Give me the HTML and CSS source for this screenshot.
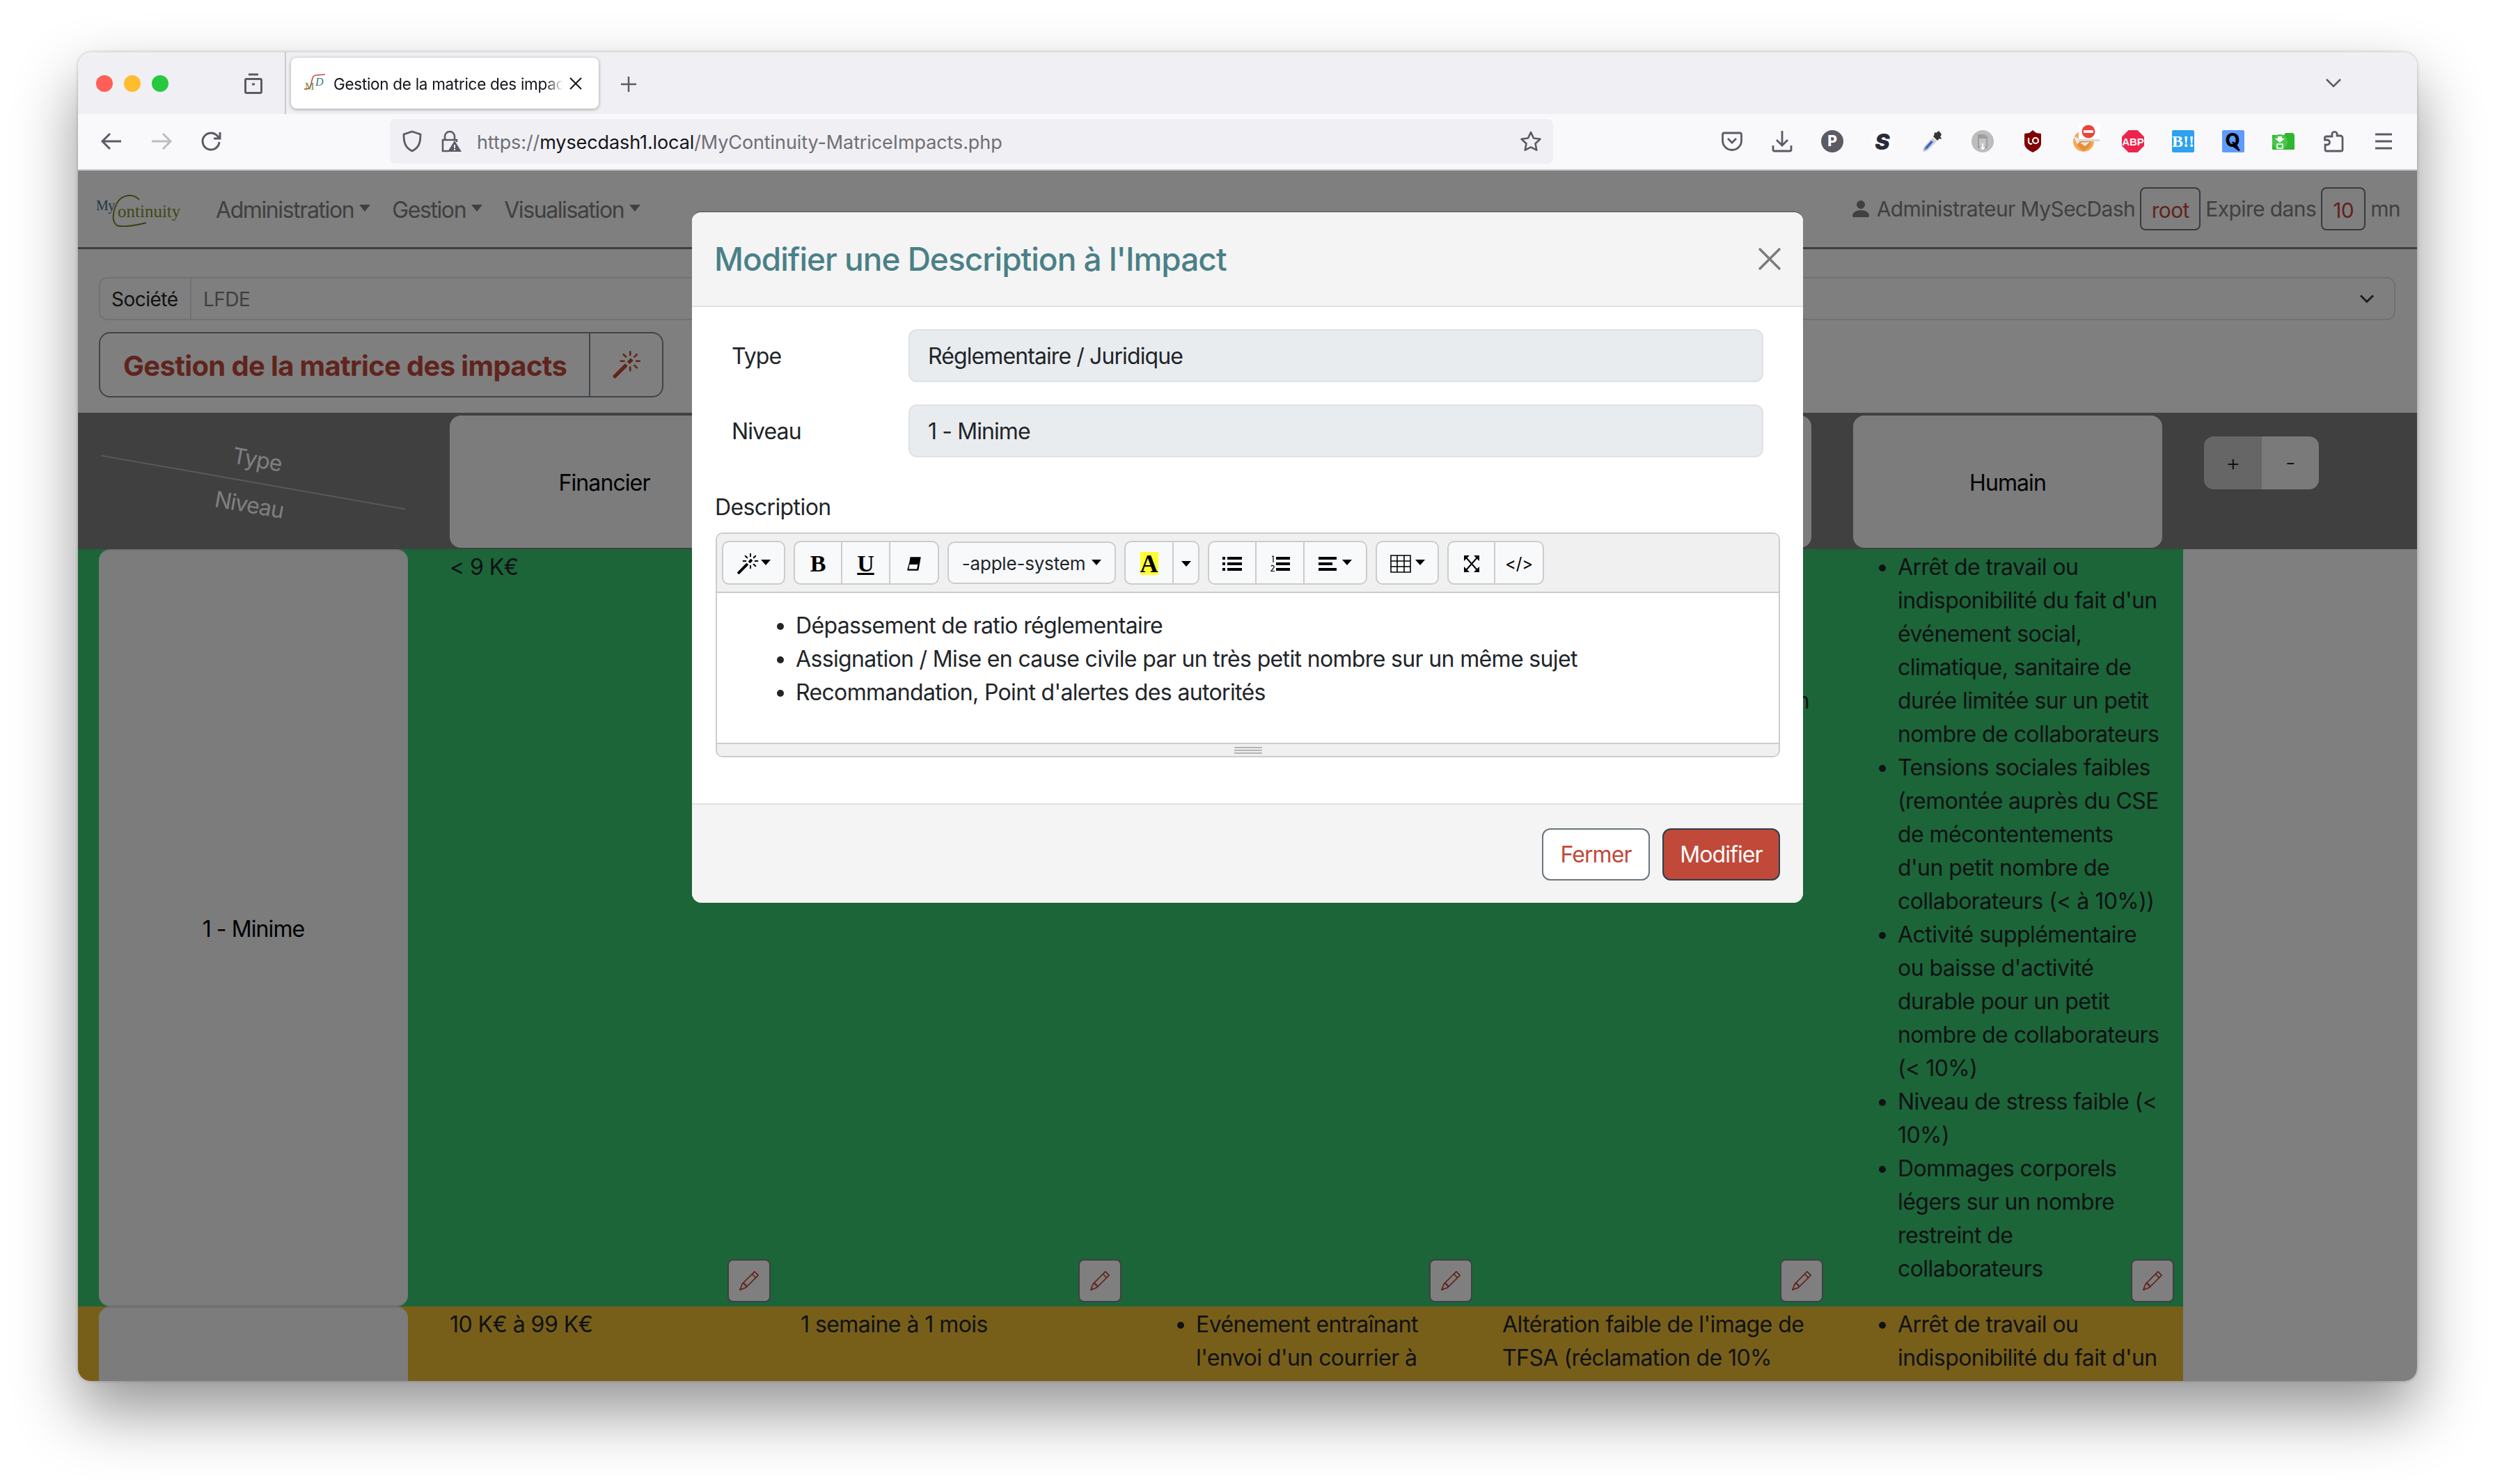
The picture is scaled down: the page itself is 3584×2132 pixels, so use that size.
FILE: index.html
```html
<!DOCTYPE html>
<html lang="fr">
<head>
<meta charset="utf-8">
<title>Gestion de la matrice des impacts</title>
<link rel="stylesheet" href="styles.css">
</head>
<body>
<div class="window">
  <header class="titlebar">
    <div class="lights"><span class="light red"></span><span class="light amber"></span><span class="light green"></span></div>
    <svg class="fxview" viewBox="0 0 32 32" width="32" height="32"><path d="M9 3h14M6 9.500h20a1.500 1.500 0 0 1 1.500 1.500v17a1.500 1.500 0 0 1-1.500 1.500H6A1.500 1.500 0 0 1 4.500 28V11A1.500 1.500 0 0 1 6 9.500zM14 17h4" fill="none" stroke="#5b5b66" stroke-width="3"/></svg>
    <div class="tab-sep"></div>
    <div class="tab">
      <svg class="favicon" viewBox="0 0 32 32" width="32" height="32"><path d="M1 23l8-1 4-15c1-3 3-4 6-4l12-1" fill="none" stroke="#c0493a" stroke-width="1.500"/><text x="2" y="24" class="fav-m">M</text><text x="17" y="18" class="fav-d">D</text></svg>
      <span class="tab-title">Gestion de la matrice des impacts</span>
      <svg class="tab-close" viewBox="0 0 20 20" width="20" height="20"><path d="M2 2l16 16M18 2L2 18" stroke="#15141a" stroke-width="2"/></svg>
    </div>
    <svg class="newtab" viewBox="0 0 24 24" width="24" height="24"><path d="M12 1v22M1 12h22" stroke="#5b5b66" stroke-width="2.500"/></svg>
    <svg class="tablist" viewBox="0 0 24 24" width="24" height="24"><path d="M2 7l10 10L22 7" fill="none" stroke="#5b5b66" stroke-width="2.500"/></svg>
  </header>

  <nav class="toolbar">
    <svg class="tb-back" viewBox="0 0 32 32" width="32" height="32"><path d="M30 16H4M14 5L3 16l11 11" fill="none" stroke="#5b5b66" stroke-width="3"/></svg>
    <svg class="tb-fwd" viewBox="0 0 32 32" width="32" height="32"><path d="M2 16h26M18 5l11 11-11 11" fill="none" stroke="#bdbdc2" stroke-width="3"/></svg>
    <svg class="tb-reload" viewBox="0 0 32 32" width="32" height="32"><path d="M27 17a12 12 0 1 1-4-10l5 5M28 3v9h-9" fill="none" stroke="#5b5b66" stroke-width="3"/></svg>
    <div class="urlbar">
      <svg class="shield" viewBox="0 0 32 32" width="32" height="32"><path d="M16 2l12 4c0 12-2 19-12 24C6 25 4 18 4 6z" fill="none" stroke="#5b5b66" stroke-width="2.800"/></svg>
      <svg class="lock" viewBox="0 0 32 32" width="32" height="32"><path d="M8 14V9a7 7 0 0 1 14 0v5M14 30H5V14h20v3" fill="none" stroke="#5b5b66" stroke-width="2.600"/><path d="M22 15l10 16H12z" fill="#5b5b66"/><path d="M22 21v5M22 27v2" stroke="#f0f0f4" stroke-width="2"/></svg>
      <span class="url"><span class="url-dim">https://</span>mysecdash1.local<span class="url-dim">/MyContinuity-MatriceImpacts.php</span></span>
      <svg class="star" viewBox="0 0 32 32" width="32" height="32"><path d="M16 3l4 8.500 9.500 1.300-7 6.500 1.800 9.400L16 24.300l-8.300 4.400 1.800-9.400-7-6.500L12 11.500z" fill="none" stroke="#5b5b66" stroke-width="2.600" stroke-linejoin="round"/></svg>
    </div>
    <div class="addons">
      <svg class="addon" viewBox="0 0 32 32"><path d="M5 4h22a2.500 2.500 0 0 1 2.500 2.500V15a13.500 13.500 0 0 1-27 0V6.500A2.500 2.500 0 0 1 5 4zM10 12l6 6 6-6" fill="none" stroke="#5b5b66" stroke-width="2.800"/></svg>
      <svg class="addon" viewBox="0 0 32 32"><path d="M16 1v21M8 14l8 8 8-8M3 22v6a2 2 0 0 0 2 2h22a2 2 0 0 0 2-2v-6" fill="none" stroke="#5b5b66" stroke-width="2.800"/></svg>
      <svg class="addon" viewBox="0 0 32 32"><circle cx="16" cy="16" r="16" fill="#5b5b66"/><text x="16" y="23" class="ao-p">P</text></svg>
      <svg class="addon" viewBox="0 0 32 32"><circle cx="16" cy="16" r="16" fill="#fff"/><text x="16" y="28" class="ao-s">S</text></svg>
      <svg class="addon" viewBox="0 0 32 32"><path d="M2 31l1-6L16 11l6 5L8 30z" fill="#c8ccd4"/><path d="M4 29l2-5 8-9 3 2-8 9z" fill="#3a66c8"/><path d="M17 9l6 6 3-3 2 1 1-2-2-1 2-4-4-5-4 3-1-1-2 2 1 1z" fill="#33343c"/></svg>
      <svg class="addon" viewBox="0 0 32 32"><circle cx="16" cy="16" r="16" fill="#bdbdbd"/><path d="M9 6h10l4 4v16H9z" fill="#9d9d9d"/><path d="M11 12h10v11H11z" fill="#c4c4c4"/><path d="M16 19v7M13 24l3 3 3-3" stroke="#fff" stroke-width="2" fill="none"/></svg>
      <svg class="addon" viewBox="0 0 32 32"><path d="M16 0l5 4 7 1v14c0 6-6 10-12 13C10 29 4 25 4 19V5l7-1z" fill="#800000"/><path d="M10 11v6a3 3 0 0 0 5 2M16 15a4 4 0 1 0 8 0 4 4 0 1 0-8 0" fill="none" stroke="#fff" stroke-width="2.200"/></svg>
      <svg class="addon" viewBox="0 0 32 32" overflow="visible"><circle cx="17" cy="16" r="15" fill="#f4a95c"/><path d="M6 12l24-1-4 13-9 6-8-6z" fill="#e88f35"/><path d="M2 8l12 6-6 6zM12 18l14-1-7 6z" fill="#e9e9e9"/><rect x="10" y="-10" width="30" height="25" rx="2" fill="#fff"/><rect x="10" y="13" width="30" height="3" fill="#d8d8d8"/><circle cx="24" cy="2" r="9.500" fill="#e8463c"/><rect x="17" y="0" width="14" height="4" fill="#f0f0f0"/></svg>
      <svg class="addon" viewBox="0 0 32 32"><path d="M9.500 0h13L32 9.500v13L22.500 32h-13L0 22.500v-13z" fill="#ed254e"/><text x="16" y="22" class="ao-abp">ABP</text></svg>
      <svg class="addon" viewBox="0 0 32 32"><rect width="32" height="32" rx="2" fill="#2ea1ef"/><text x="16" y="24" class="ao-b">B!!</text></svg>
      <svg class="addon" viewBox="0 0 32 32"><rect width="32" height="32" rx="2" fill="#5e9bff"/><text x="15" y="24" class="ao-q">Q</text><path d="M17 23l8 6" stroke="#000" stroke-width="3"/></svg>
      <svg class="addon" viewBox="0 0 32 32"><path d="M0 7h17l2-3h11l2 3v20a1 1 0 0 1-1 1H1a1 1 0 0 1-1-1z" fill="#2fb52f"/><circle cx="11" cy="17" r="11" fill="#49c649"/><path d="M8 9h6v3h4l-7 6-7-6h4z" fill="#fff"/><rect x="7" y="20" width="8" height="6" fill="none" stroke="#fff" stroke-width="1.600"/></svg>
      <svg class="addon" viewBox="0 0 32 32"><path d="M14 4.500a4 4 0 0 1 7 0c.5 1 0 2 0 3.500h5a3 3 0 0 1 3 3v17a2 2 0 0 1-2 2H6a2 2 0 0 1-2-2v-7h3a3.500 3.500 0 0 0 0-7H3.500v-3a2 2 0 0 1 2-2H14c.3-1.500-.5-2.500 0-3.500z" fill="none" stroke="#5b5b66" stroke-width="2.800"/></svg>
      <svg class="addon" viewBox="0 0 32 32"><path d="M4 6h24M4 16h24M4 26h24" stroke="#5b5b66" stroke-width="3"/></svg>
    </div>
  </nav>

  <main class="page">
    <div class="navbar">
      <div class="nav-left">
        <svg class="logo" viewBox="0 0 121 48" width="121" height="48"><path d="M62 9C52-2 34 2 28 18c-4 11-6 22 2 28 10 3 26 0 42-4" fill="none" stroke="#76851f" stroke-width="2"/><text x="0" y="24" class="logo-my">My</text><text x="31" y="34" class="logo-cont">ontinuity</text></svg>
        <a class="nav-link nav-admin">Administration<span class="caret"></span></a>
        <a class="nav-link nav-gestion">Gestion<span class="caret"></span></a>
        <a class="nav-link">Visualisation<span class="caret"></span></a>
      </div>
      <div class="nav-right">
        <svg class="person" viewBox="0 0 16 16" width="32" height="32"><path d="M3 14s-1 0-1-1 1-4 6-4 6 3 6 4-1 1-1 1H3Zm5-6a3 3 0 1 0 0-6 3 3 0 0 0 0 6Z"/></svg>
        <span>Administrateur MySecDash</span>
        <span class="tag tag-root">root</span>
        <span>Expire dans</span>
        <span class="tag tag-time">10</span>
        <span>mn</span>
      </div>
    </div>

    <div class="company">
      <span class="company-label">Société</span>
      <span class="company-value">LFDE</span>
      <svg class="company-chev" viewBox="0 0 16 16" width="24" height="24"><path d="M2 5l6 6 6-6" fill="none" stroke="#343a40" stroke-width="2"/></svg>
    </div>

    <div class="page-title">
      <h1 class="page-title-text">Gestion de la matrice des impacts</h1>
      <span class="page-title-btn">
        <svg viewBox="0 0 16 16" width="42" height="42" class="wand-red"><path d="M9.500 2.672a.5.5 0 1 0 1 0V.843a.5.5 0 0 0-1 0v1.829Zm4.500.035A.5.5 0 0 0 13.293 2L12 3.293a.5.5 0 1 0 .707.707L14 2.707ZM7.293 4A.5.5 0 1 0 8 3.293L6.707 2A.5.5 0 0 0 6 2.707L7.293 4Zm-.621 2.500a.5.5 0 1 0 0-1H4.843a.5.5 0 1 0 0 1h1.829Zm8.485 0a.5.5 0 1 0 0-1h-1.829a.5.5 0 0 0 0 1h1.829ZM13.293 10A.5.5 0 1 0 14 9.293L12.707 8a.5.5 0 1 0-.707.707L13.293 10ZM9.500 11.157a.5.5 0 0 0 1 0V9.328a.5.5 0 0 0-1 0v1.829Zm1.854-5.097a.5.5 0 0 0 0-.706l-.708-.708a.5.5 0 0 0-.707 0L8.646 5.940a.5.5 0 0 0 0 .707l.708.708a.5.5 0 0 0 .707 0l1.293-1.293Zm-3 3a.5.5 0 0 0 0-.706l-.708-.708a.5.5 0 0 0-.707 0L.646 13.940a.5.5 0 0 0 0 .707l.708.708a.5.5 0 0 0 .707 0L8.354 9.060Z"/></svg>
      </span>
    </div>

    <div class="matrix">
      <div class="head-corner">
        <div class="corner-inner">
          <span>Type</span>
          <span class="corner-line"></span>
          <span>Niveau</span>
        </div>
      </div>
      <div class="head-cell"><div class="head-box">Financier</div></div>
      <div class="head-cell"><div class="head-box">Opérationnel</div></div>
      <div class="head-cell"><div class="head-box">Réglementaire / Juridique</div></div>
      <div class="head-cell"><div class="head-box">Image</div></div>
      <div class="head-cell"><div class="head-box">Humain</div></div>
      <div class="head-tools"><div class="plusminus"><span class="pm pm-plus">+</span><span class="pm pm-minus">-</span></div></div>

      <div class="level green"><div class="level-box">1 - Minime</div></div>
      <div class="cell green">&lt; 9 K€<button class="edit"><svg viewBox="0 0 16 16" width="28" height="28"><path d="M12.146.146a.5.5 0 0 1 .708 0l3 3a.5.5 0 0 1 0 .708l-10 10a.5.5 0 0 1-.168.11l-5 2a.5.5 0 0 1-.65-.65l2-5a.5.5 0 0 1 .11-.168l10-10zM11.207 2.500 13.500 4.793 14.793 3.500 12.500 1.207 11.207 2.500zm1.586 3L10.500 3.207 4 9.707V10h.5a.5.5 0 0 1 .5.5v.5h.5a.5.5 0 0 1 .5.5v.5h.293l6.500-6.500zm-9.761 5.175-.106.106-1.528 3.821 3.821-1.528.106-.106A.5.5 0 0 1 5 12.500V12h-.5a.5.5 0 0 1-.5-.5V11h-.5a.5.5 0 0 1-.468-.325z"/></svg></button></div>
      <div class="cell green"><button class="edit"><svg viewBox="0 0 16 16" width="28" height="28"><path d="M12.146.146a.5.5 0 0 1 .708 0l3 3a.5.5 0 0 1 0 .708l-10 10a.5.5 0 0 1-.168.11l-5 2a.5.5 0 0 1-.65-.65l2-5a.5.5 0 0 1 .11-.168l10-10zM11.207 2.500 13.500 4.793 14.793 3.500 12.500 1.207 11.207 2.500zm1.586 3L10.500 3.207 4 9.707V10h.5a.5.5 0 0 1 .5.5v.5h.5a.5.5 0 0 1 .5.5v.5h.293l6.500-6.500zm-9.761 5.175-.106.106-1.528 3.821 3.821-1.528.106-.106A.5.5 0 0 1 5 12.500V12h-.5a.5.5 0 0 1-.5-.5V11h-.5a.5.5 0 0 1-.468-.325z"/></svg></button></div>
      <div class="cell green"><button class="edit"><svg viewBox="0 0 16 16" width="28" height="28"><path d="M12.146.146a.5.5 0 0 1 .708 0l3 3a.5.5 0 0 1 0 .708l-10 10a.5.5 0 0 1-.168.11l-5 2a.5.5 0 0 1-.65-.65l2-5a.5.5 0 0 1 .11-.168l10-10zM11.207 2.500 13.500 4.793 14.793 3.500 12.500 1.207 11.207 2.500zm1.586 3L10.500 3.207 4 9.707V10h.5a.5.5 0 0 1 .5.5v.5h.5a.5.5 0 0 1 .5.5v.5h.293l6.500-6.500zm-9.761 5.175-.106.106-1.528 3.821 3.821-1.528.106-.106A.5.5 0 0 1 5 12.500V12h-.5a.5.5 0 0 1-.5-.5V11h-.5a.5.5 0 0 1-.468-.325z"/></svg></button></div>
      <div class="cell green"><div class="stray"><br><br><br><br>n</div><button class="edit"><svg viewBox="0 0 16 16" width="28" height="28"><path d="M12.146.146a.5.5 0 0 1 .708 0l3 3a.5.5 0 0 1 0 .708l-10 10a.5.5 0 0 1-.168.11l-5 2a.5.5 0 0 1-.65-.65l2-5a.5.5 0 0 1 .11-.168l10-10zM11.207 2.500 13.500 4.793 14.793 3.500 12.500 1.207 11.207 2.500zm1.586 3L10.500 3.207 4 9.707V10h.5a.5.5 0 0 1 .5.5v.5h.5a.5.5 0 0 1 .5.5v.5h.293l6.500-6.500zm-9.761 5.175-.106.106-1.528 3.821 3.821-1.528.106-.106A.5.5 0 0 1 5 12.500V12h-.5a.5.5 0 0 1-.5-.5V11h-.5a.5.5 0 0 1-.468-.325z"/></svg></button></div>
      <div class="cell green">
        <ul class="cell-list">
          <li>Arrêt de travail ou<br>indisponibilité du fait d'un<br>événement social,<br>climatique, sanitaire de<br>durée limitée sur un petit<br>nombre de collaborateurs</li>
          <li>Tensions sociales faibles<br>(remontée auprès du CSE<br>de mécontentements<br>d'un petit nombre de<br>collaborateurs (&lt; à 10%))</li>
          <li>Activité supplémentaire<br>ou baisse d'activité<br>durable pour un petit<br>nombre de collaborateurs<br>(&lt; 10%)</li>
          <li>Niveau de stress faible (&lt;<br>10%)</li>
          <li>Dommages corporels<br>légers sur un nombre<br>restreint de<br>collaborateurs</li>
        </ul>
        <button class="edit"><svg viewBox="0 0 16 16" width="28" height="28"><path d="M12.146.146a.5.5 0 0 1 .708 0l3 3a.5.5 0 0 1 0 .708l-10 10a.5.5 0 0 1-.168.11l-5 2a.5.5 0 0 1-.65-.65l2-5a.5.5 0 0 1 .11-.168l10-10zM11.207 2.500 13.500 4.793 14.793 3.500 12.500 1.207 11.207 2.500zm1.586 3L10.500 3.207 4 9.707V10h.5a.5.5 0 0 1 .5.5v.5h.5a.5.5 0 0 1 .5.5v.5h.293l6.500-6.500zm-9.761 5.175-.106.106-1.528 3.821 3.821-1.528.106-.106A.5.5 0 0 1 5 12.500V12h-.5a.5.5 0 0 1-.5-.5V11h-.5a.5.5 0 0 1-.468-.325z"/></svg></button>
      </div>
      <div class="filler"></div>

      <div class="level gold"><div class="level-box"></div></div>
      <div class="cell gold">10 K€ à 99 K€</div>
      <div class="cell gold">1 semaine à 1 mois</div>
      <div class="cell gold"><ul class="cell-list"><li>Evénement entraînant<br>l'envoi d'un courrier à</li></ul></div>
      <div class="cell gold">Altération faible de l'image de<br>TFSA (réclamation de 10%</div>
      <div class="cell gold"><ul class="cell-list"><li>Arrêt de travail ou<br>indisponibilité du fait d'un</li></ul></div>
      <div class="filler"></div>
    </div>

    <div class="backdrop">
      <section class="modal">
        <header class="modal-head">
          <h2 class="modal-title">Modifier une Description à l'Impact</h2>
          <svg class="modal-close" viewBox="0 0 32 32" width="32" height="32"><path d="M1 1l30 30M31 1L1 31" stroke="#7b7b7b" stroke-width="3.500"/></svg>
        </header>
        <div class="modal-body">
          <div class="field field-first"><label class="field-label">Type</label><div class="field-input">Réglementaire / Juridique</div></div>
          <div class="field"><label class="field-label">Niveau</label><div class="field-input">1 - Minime</div></div>
          <div class="desc-label">Description</div>
          <div class="editor">
            <div class="ed-toolbar">
              <button class="ed-btn solo w-magic"><svg viewBox="0 0 16 16" width="32" height="32"><path d="M9.500 2.672a.5.5 0 1 0 1 0V.843a.5.5 0 0 0-1 0v1.829Zm4.500.035A.5.5 0 0 0 13.293 2L12 3.293a.5.5 0 1 0 .707.707L14 2.707ZM7.293 4A.5.5 0 1 0 8 3.293L6.707 2A.5.5 0 0 0 6 2.707L7.293 4Zm-.621 2.500a.5.5 0 1 0 0-1H4.843a.5.5 0 1 0 0 1h1.829Zm8.485 0a.5.5 0 1 0 0-1h-1.829a.5.5 0 0 0 0 1h1.829ZM13.293 10A.5.5 0 1 0 14 9.293L12.707 8a.5.5 0 1 0-.707.707L13.293 10ZM9.500 11.157a.5.5 0 0 0 1 0V9.328a.5.5 0 0 0-1 0v1.829Zm1.854-5.097a.5.5 0 0 0 0-.706l-.708-.708a.5.5 0 0 0-.707 0L8.646 5.940a.5.5 0 0 0 0 .707l.708.708a.5.5 0 0 0 .707 0l1.293-1.293Zm-3 3a.5.5 0 0 0 0-.706l-.708-.708a.5.5 0 0 0-.707 0L.646 13.940a.5.5 0 0 0 0 .707l.708.708a.5.5 0 0 0 .707 0L8.354 9.060Z"/></svg><span class="caret-sm"></span></button>
              <div class="ed-group">
                <button class="ed-btn w-70 serif-b">B</button>
                <button class="ed-btn w-69 serif-b underline">U</button>
                <button class="ed-btn w-70"><svg viewBox="0 0 24 24" width="26" height="26"><path d="M7 3h14l-1 6H6zM6 9h14l-2 11a1 1 0 0 1-1 1H4a1 1 0 0 1-1-1z" fill="#000"/><path d="M6 13h11l-1.300 6H5z" fill="#f8f9fa"/></svg></button>
              </div>
              <button class="ed-btn solo w-font">-apple-system<span class="caret-sm"></span></button>
              <div class="ed-group">
                <button class="ed-btn w-71"><span class="color-a">A</span></button>
                <button class="ed-btn w-37"><span class="caret-sm flush"></span></button>
              </div>
              <div class="ed-group">
                <button class="ed-btn w-70"><svg viewBox="0 0 28 24" width="28" height="24"><path d="M0 2h4v4H0zM7 2h21v4H7zM0 10h4v4H0zM7 10h21v4H7zM0 18h4v4H0zM7 18h21v4H7z"/></svg></button>
                <button class="ed-btn w-69"><svg viewBox="0 0 28 24" width="28" height="24"><path d="M8 2h20v4H8zM8 10h20v4H8zM8 18h20v4H8z"/><path d="M2 1.500L4 1v9" stroke="#000" stroke-width="1.200" fill="none"/><path d="M1 15.500c1-2 5-1 4 1.500L1 22.500h5" stroke="#000" stroke-width="1.200" fill="none"/></svg></button>
                <button class="ed-btn w-90"><svg viewBox="0 0 28 24" width="28" height="24"><path d="M0 2h26v4H0zM0 10h20v4H0zM0 18h26v4H0z"/></svg><span class="caret-sm"></span></button>
              </div>
              <button class="ed-btn solo w-table"><svg viewBox="0 0 30 26" width="30" height="26"><path d="M1 1h28v24H1zM1 9h28M1 17h28M10 1v24M20 1v24" fill="none" stroke="#000" stroke-width="1.600"/></svg><span class="caret-sm"></span></button>
              <div class="ed-group">
                <button class="ed-btn w-69"><svg viewBox="0 0 24 26" width="24" height="26"><path d="M1 1h8L1 9zM23 1h-8l8 8zM1 25h8l-8-8zM23 25h-8l8-8z"/><path d="M4 4l16 18M20 4L4 22" stroke="#000" stroke-width="2"/></svg></button>
                <button class="ed-btn w-70 code">&lt;/&gt;</button>
              </div>
            </div>
            <div class="ed-content">
              <ul class="ed-list">
                <li>Dépassement de ratio réglementaire</li>
                <li>Assignation / Mise en cause civile par un très petit nombre sur un même sujet</li>
                <li>Recommandation, Point d'alertes des autorités</li>
              </ul>
            </div>
            <div class="ed-status"><span class="grip"></span></div>
          </div>
        </div>
        <footer class="modal-foot">
          <button class="btn btn-close">Fermer</button>
          <button class="btn btn-save">Modifier</button>
        </footer>
      </section>
    </div>
  </main>
</div>
</body>
</html>
```

FILE: styles.css
```css
* { box-sizing: border-box; }
html, body { margin: 0; height: 2132px; overflow: hidden; background: #fff; }
body {
  padding: 75px 112px 0;
  font-family: Inter, "Liberation Sans", sans-serif;
  font-size: 32px;
  line-height: 48px;
  color: #212529;
  letter-spacing: -0.9px;
}
button { font: inherit; letter-spacing: inherit; color: inherit; }
svg { display: block; flex: none; }

.window {
  position: relative;
  width: 3360px;
  height: 1909px;
  overflow: hidden;
  border-radius: 20px 20px 18px 18px;
  box-shadow: 0 44px 90px rgba(0,0,0,.42), 0 0 4px rgba(0,0,0,.25);
  background: #fff;
}

/* Browser chrome */
.titlebar {
  height: 89px;
  display: flex;
  align-items: flex-start;
  background: #f0f0f4;
}
.lights { display: flex; gap: 16px; margin: 33px 0 0 26px; }
.light { width: 24px; height: 24px; border-radius: 50%; }
.red { background: #ff5f57; }
.amber { background: #febc2e; }
.lights .green { background: #28c840; }
.fxview { margin: 29px 0 0 106px; }
.tab-sep { width: 2px; height: 89px; margin-left: 29px; background: #c9c9ce; }
.tab {
  width: 442px;
  height: 73px;
  margin: 8px 0 0 7px;
  padding: 2px 23px 0 18px;
  display: flex;
  align-items: center;
  background: #fff;
  border-radius: 8px;
  box-shadow: 0 1px 5px rgba(0,0,0,.35);
  font-size: 22.500px;
  letter-spacing: -0.3px;
  color: #15141a;
}
.favicon { margin-right: 11px; }
.fav-m { font: 15px "Liberation Serif", serif; fill: #7a8a3a; letter-spacing: 0; }
.fav-d { font: italic 16px "Liberation Serif", serif; fill: #2c7a87; letter-spacing: 0; }
.tab-title {
  flex: 1;
  white-space: nowrap;
  overflow: hidden;
  -webkit-mask-image: linear-gradient(to right, #000 92%, transparent);
  mask-image: linear-gradient(to right, #000 92%, transparent);
}
.tab-close { margin-left: 8px; margin-top: -2px; }
.newtab { margin: 34px 0 0 31px; }
.tablist { margin: 32px 0 0 2425px; }

.toolbar {
  height: 81px;
  padding: 8px 0 9px 32px;
  display: flex;
  align-items: center;
  background: #f9f9fb;
  border-bottom: 2px solid #cfcfd3;
}
.tb-fwd { margin-left: 40px; }
.tb-reload { margin-left: 40px; }
.urlbar {
  width: 1671px;
  height: 64px;
  margin-left: 240px;
  padding: 0 16px;
  display: flex;
  align-items: center;
  background: #f0f0f4;
  border-radius: 8px;
}
.lock { margin-left: 23px; }
.url { margin-left: 22px; padding-top: 3px; flex: 1; font-size: 27px; letter-spacing: -0.1px; color: #15141a; }
.url-dim { color: #6f6f76; }
.addons { display: flex; gap: 40px; margin-left: 241px; }
.addon { width: 32px; height: 32px; }
.ao-p { font: 800 21px Inter, sans-serif; fill: #fff; text-anchor: middle; letter-spacing: 0; }
.ao-s { font: italic 900 32px Inter, sans-serif; fill: #2b2a3d; text-anchor: middle; letter-spacing: 0; }
.ao-abp { font: 800 15px "Liberation Sans", sans-serif; fill: #fff; text-anchor: middle; letter-spacing: 0; }
.ao-b { font: bold 24px "Liberation Serif", serif; fill: #fff; text-anchor: middle; letter-spacing: 0; }
.ao-q { font: 800 27px Inter, sans-serif; fill: #000; text-anchor: middle; letter-spacing: 0; }

/* Page under the dimmed backdrop */
.page { position: relative; height: 1739px; background: #fff; }
.navbar {
  height: 113px;
  padding: 0 24px 0 26px;
  display: flex;
  justify-content: space-between;
  align-items: center;
  border-bottom: 3px solid #7c7c7c;
  color: #808080;
}
.nav-left, .nav-right { display: flex; align-items: center; }
.logo { margin-right: 51px; }
.logo-my { font: 20px "Liberation Serif", serif; fill: #3d6f8a; letter-spacing: -0.5px; }
.logo-cont { font: 25px "Liberation Serif", serif; fill: #80902a; letter-spacing: 0; }
.nav-left { padding-top: 4px; letter-spacing: -1.4px; }
.nav-link { display: flex; align-items: center; margin-right: 31px; }
.caret {
  margin-left: 8px;
  margin-bottom: 6px;
  border-top: 10px solid currentColor;
  border-left: 8px solid transparent;
  border-right: 8px solid transparent;
}
.nav-right { gap: 7px; font-size: 30px; letter-spacing: -0.6px; }
.person { fill: #808080; margin: 0 0 0 -4px; }
.tag {
  height: 62px;
  display: flex;
  align-items: center;
  justify-content: center;
  padding-top: 3px;
  border: 2px solid #6f7780;
  border-radius: 8px;
  color: #c0493a;
}
.tag-root { width: 87px; }
.tag-time { width: 64px; }

.company {
  height: 62px;
  margin: 40px 31px 0 30px;
  display: flex;
  align-items: center;
  border: 2px solid #dee2e6;
  border-radius: 12px;
  font-size: 28px;
  letter-spacing: -0.5px;
}
.company-label {
  height: 100%;
  padding: 6px 16px 0 16px;
  width: 131px;
  color: #212529;
  border-right: 2px solid #dee2e6;
  white-space: nowrap;
}
.company-value { flex: 1; padding: 2px 0 0 17px; color: #808080; }
.company-chev { margin-right: 27px; }

.page-title {
  width: 811px;
  height: 94px;
  margin: 17px 0 0 30px;
  display: flex;
  border: 2px solid #7e8a94;
  border-radius: 16px;
  color: #c0493a;
}
.page-title-text {
  width: 702px;
  margin: 0;
  padding: 0 0 0 33px;
  font-size: 40px;
  font-weight: 700;
  line-height: 93px;
  letter-spacing: -0.65px;
  white-space: nowrap;
}
.page-title-btn {
  flex: 1;
  display: flex;
  align-items: center;
  justify-content: center;
  border-left: 2px solid #7e8a94;
}
.wand-red { fill: #c0493a; }

/* Matrix */
.matrix {
  margin-top: 22px;
  display: grid;
  grid-template-columns: repeat(6, 504px) 336px;
  grid-template-rows: 196px 1088px 200px;
}
.head-corner, .head-cell, .head-tools { background: #808080; }
.head-corner { display: flex; align-items: center; justify-content: center; color: #fff; }
.corner-inner {
  width: 444px;
  transform: rotate(10deg);
  display: flex;
  flex-direction: column;
  align-items: center;
  gap: 8px;
  padding-top: 3px;
}
.corner-line { width: 100%; height: 2px; background: #b0b0b0; }
.head-cell { padding: 4px 30px 2px; }
.head-box {
  height: 100%;
  padding-top: 3px;
  display: flex;
  align-items: center;
  justify-content: center;
  background: #f8f9fa;
  border-radius: 16px;
  color: #000;
}
.head-tools { padding: 34px 0 0 30px; }
.plusminus { width: 165px; height: 76px; display: flex; border-radius: 14px; overflow: hidden; font-weight: 300; }
.pm { width: 50%; display: flex; align-items: center; justify-content: center; color: #212529; }
.pm-plus { background: #cdcdcd; }
.pm-minus { background: #f5f5f5; }

.level { padding: 0 30px; }
.green.level, .green.cell { background: #38ca72; }
.gold.level, .gold.cell { background: #f0be32; }
.level-box {
  height: 100%;
  padding-top: 3px;
  display: flex;
  align-items: center;
  justify-content: center;
  background: #f8f9fa;
  border-block: 2px solid #e2e2e2;
  border-radius: 16px;
  color: #000;
}
.gold .level-box { border-radius: 16px 16px 0 0; }
.cell { position: relative; padding: 2px 30px 0; letter-spacing: -0.55px; }
.cell-list { margin: 0; padding: 0 0 0 64px; white-space: nowrap; }
.stray { text-align: right; padding-right: 3px; }
.edit {
  position: absolute;
  right: 13px;
  bottom: 6px;
  width: 62px;
  height: 62px;
  padding: 0;
  display: flex;
  align-items: center;
  justify-content: center;
  background: #fff;
  border: 2px solid #7e8088;
  border-radius: 8px;
}
.edit svg { fill: #c0493a; }
.filler { background: #fff; }

/* Modal */
.backdrop {
  position: absolute;
  inset: 0;
  display: flex;
  justify-content: center;
  align-items: flex-start;
  padding-top: 58px;
  background: rgba(0,0,0,.5);
}
.modal {
  width: 1596px;
  overflow: hidden;
  background: #fff;
  border-radius: 14px;
  border-top: 2px solid #6b6b6b;
}
.modal-head {
  height: 136px;
  padding: 0 32px 0 32px;
  display: flex;
  align-items: center;
  justify-content: space-between;
  background: #f4f4f4;
  border-bottom: 2px solid #dee2e6;
}
.modal-title { margin: 0; font-size: 46px; font-weight: 500; line-height: 60px; color: #4a8088; letter-spacing: -1px; }
.modal-body { padding: 0 33px 66px 34px; }
.field { display: flex; align-items: center; margin: 32px 24px 0 23px; }
.field-first { margin-top: 32px; }
.field-label { width: 254px; flex: none; padding-top: 2px; }
.field-input {
  flex: 1;
  height: 76px;
  padding: 2px 26px 0;
  display: flex;
  align-items: center;
  background: #e9ecef;
  border: 2px solid #dee2e6;
  border-radius: 12px;
}
.desc-label { margin: 48px 0 12px -1px; letter-spacing: -0.6px; }

.editor {
  height: 323px;
  display: flex;
  flex-direction: column;
  border: 2px solid #ccc;
  border-radius: 10px;
  overflow: hidden;
}
.ed-toolbar {
  height: 85px;
  flex: none;
  padding: 10px 0 0 7px;
  display: flex;
  align-items: flex-start;
  gap: 12px;
  background: #f0f0f0;
  border-bottom: 2px solid #ccc;
  letter-spacing: 0;
}
.ed-group { display: flex; }
.ed-btn {
  height: 63px;
  padding: 2px 0 0;
  display: flex;
  align-items: center;
  justify-content: center;
  gap: 3px;
  background: #f8f9fa;
  border: 2px solid #ccc;
  border-left-width: 0;
  color: #000;
  font-size: 26px;
  letter-spacing: -0.2px;
}
.solo { border-left-width: 2px; border-radius: 10px; }
.ed-group .ed-btn:first-child { border-left-width: 2px; border-radius: 10px 0 0 10px; }
.ed-group .ed-btn:last-child { border-radius: 0 10px 10px 0; }
.w-magic { width: 91px; }
.w-font { width: 242px; height: 61px; margin-top: 1px; gap: 9px; color: #212529; }
.w-table { width: 91px; gap: 6px; }
.w-70 { width: 70px; }
.w-69 { width: 69px; }
.w-71 { width: 71px; }
.w-37 { width: 37px; }
.w-90 { width: 90px; gap: 6px; }
.serif-b { font: bold 34px/1 "Liberation Serif", serif; }
.underline { text-decoration: underline; }
.code { font-size: 24px; }
.color-a {
  width: 26px;
  height: 33px;
  display: block;
  background: #ff3;
  color: #000;
  text-align: center;
  font: bold 36px/34px "Liberation Serif", serif;
}
.caret-sm {
  margin-bottom: 4px;
  border-top: 8px solid #000;
  border-left: 7px solid transparent;
  border-right: 7px solid transparent;
}
.flush { margin: 0; }
.ed-content { flex: 1; padding-top: 23px; background: #fff; }
.ed-list { margin: 0; padding-left: 113px; letter-spacing: -0.65px; }
.ed-status {
  height: 19px;
  flex: none;
  display: flex;
  align-items: center;
  justify-content: center;
  background: #f0f0f0;
  border-top: 2px solid #ccc;
}
.grip {
  width: 40px;
  height: 10px;
  background: repeating-linear-gradient(to bottom, #b4b4b4 0 2px, transparent 2px 4px);
}
.modal-foot {
  height: 143px;
  padding: 34px 33px 0 0;
  display: flex;
  justify-content: flex-end;
  align-items: flex-start;
  gap: 18px;
  background: #f4f4f4;
  border-top: 2px solid #dee2e6;
}
.btn { height: 75px; border-radius: 12px; padding: 0; border: 2px solid #6c757d; }
.btn-close { width: 155px; background: #fff; color: #c0493a; }
.btn-save { width: 169px; background: #c0493a; color: #fff; border-color: #2c3e50; }
```
